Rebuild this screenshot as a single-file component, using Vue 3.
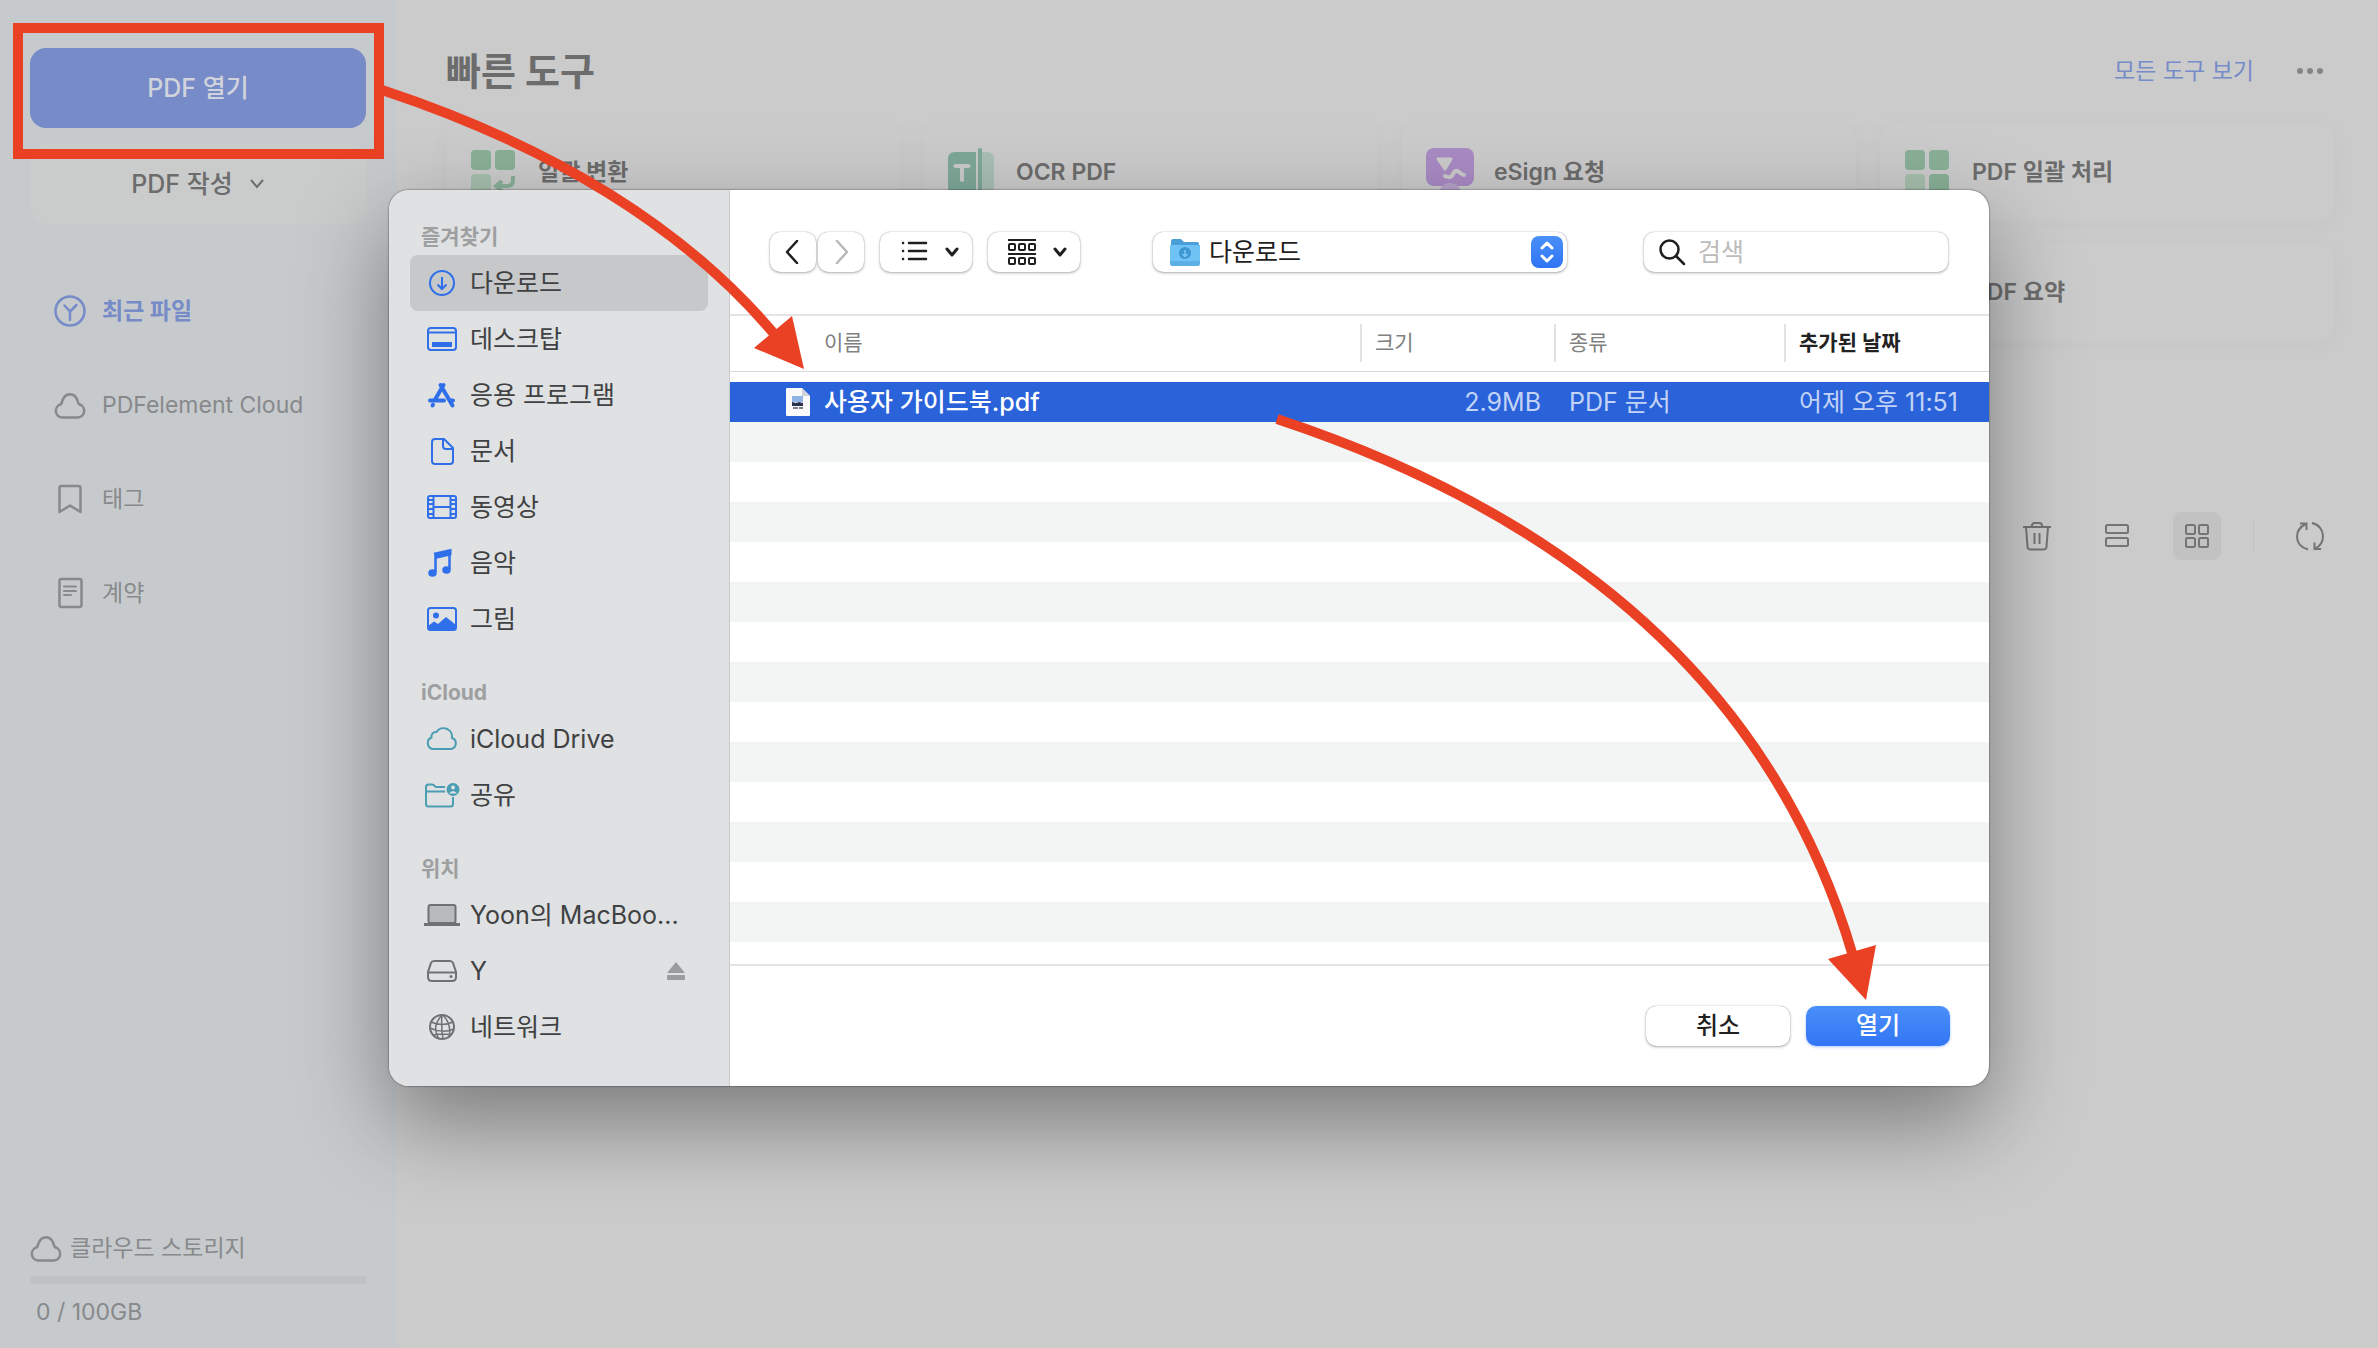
<script setup>
import { ref } from 'vue'

const navIcons = {
  recent: '<circle cx="16" cy="16" r="14.5"/><path d="M10.500 10.500 16 16.500 22.500 10M16 16.500V25"/>',
  cloud: '<path d="M8 28.500a6.700 6.700 0 0 1-1-13.200C8 13 8.500 10.500 10 8.500a7.300 7.300 0 0 1 12 0c1.500 2 1.600 4.700 3 6.800a6.700 6.700 0 0 1-1 13.200z"/>',
  tag: '<path d="M5.500 29V5q0-2 2-2h17q2 0 2 2v24L16 22.500z"/>',
  contract: '<rect x="5.500" y="2" width="22" height="28" rx="2"/><path d="M10 9.500h12M10 14h12M10 18h7" stroke-width="2"/>'
}

const nav = [
  { icon: 'recent', label: '최근 파일', active: true },
  { icon: 'cloud', label: 'PDFelement Cloud' },
  { icon: 'tag', label: '태그' },
  { icon: 'contract', label: '계약' }
]

const toolIcons = {
  convert: '<rect x="1" y="2" width="20" height="20" rx="4" fill="#89b097"/><rect x="25" y="2" width="20" height="20" rx="4" fill="#89b097"/><rect x="1" y="26" width="20" height="20" rx="4" fill="#a6bfad"/><path d="M43 28v4q0 6-6 6h-10M32 33l-6 5 6 5" fill="none" stroke="#89b097" stroke-width="4"/>',
  ocr: '<path d="M7 4h21v42H7q-7 0-7-7V11q0-7 7-7z" fill="#7fa898"/><rect x="30" y="0" width="4" height="48" rx="2" fill="#7fa898"/><path d="M34 4h5q7 0 7 7v28q0 7-7 7h-5z" fill="#a9bfb4"/><path d="M7.500 18h13M14 18v14" stroke="#cbcbcb" stroke-width="4" stroke-linecap="round"/>',
  sign: '<rect x="0" y="0" width="48" height="38" rx="8" fill="#a98bc4"/><circle cx="24" cy="46" r="11" fill="#b9a3cb"/><path d="M12 11h13l-6 10z" fill="#cbcbcb" stroke="#cbcbcb" stroke-width="3" stroke-linejoin="round"/><path d="M19 28q6 3 8-2t6-2 5 3" fill="none" stroke="#cbcbcb" stroke-width="4" stroke-linecap="round"/>',
  batch: '<rect x="1" y="2" width="20" height="20" rx="4" fill="#89b097"/><rect x="25" y="2" width="20" height="20" rx="4" fill="#89b097"/><rect x="1" y="26" width="20" height="20" rx="4" fill="#a6bfad"/><rect x="25" y="26" width="20" height="20" rx="4" fill="#89b097"/>'
}

const tools = [
  { icon: 'convert', label: '일괄 변환' },
  { icon: 'ocr', label: 'OCR PDF' },
  { icon: 'sign', label: 'eSign 요청' },
  { icon: 'batch', label: 'PDF 일괄 처리' },
  {},
  {},
  {},
  { icon: '', label: 'PDF 요약' }
]

const placeIcons = {
  downloads: '<circle cx="20" cy="20" r="12"/><path d="M20 14v12M15.500 21.500 20 26l4.500-4.500"/>',
  desktop: '<rect x="6" y="9" width="28" height="22" rx="3"/><path d="M6 13.500h28"/><rect x="11" y="24" width="18" height="3" fill="currentColor"/>',
  apps: '<g stroke-width="4" stroke-linecap="round"><path d="M21.500 10 12.500 25.500M18.500 10l12 20.500M8 25.500h14M28 25.500h3" /><path d="M10.500 30.500l.5-.8"/></g>',
  documents: '<path d="M13 8h9l9 9v13q0 3-3 3H13q-3 0-3-3V11q0-3 3-3z"/><path d="M21 8v7q0 3 3 3h7"/>',
  movies: '<rect x="6" y="9" width="28" height="22" rx="2"/><path d="M11.500 9v22M28.500 9v22M11.500 20h17M6 13h5M6 17h5M6 22h5M6 27h5M29 13h5M29 17h5M29 22h5M29 27h5"/>',
  music: '<path d="M13 10.500 28.500 7v4.500L15 14.500z" fill="currentColor"/><path d="M13.500 11v18M27.500 8v18" stroke-width="2.500"/><ellipse cx="10.500" cy="30" rx="3.500" ry="3" fill="currentColor" stroke-width="1.500"/><ellipse cx="24.500" cy="27" rx="3.500" ry="3" fill="currentColor" stroke-width="1.500"/>',
  pictures: '<rect x="6" y="9" width="28" height="22" rx="2.500"/><circle cx="14" cy="16.500" r="3" fill="currentColor" stroke="none"/><path d="M6 27l6-4.500 4 2.500 8-7 10 8v5H6z" fill="currentColor" stroke="none"/>',
  icloud: '<path d="M11 30a6 6 0 0 1-1.500-11.500 4.500 4.500 0 0 1 5-5.500 8.500 8.500 0 0 1 15.500 6 5.700 5.700 0 0 1-1 11z"/>',
  shared: '<path d="M31 22v7q0 2.500-2.500 2.500H6.500Q4 31.500 4 29V12q0-2.500 2.500-2.500H10q1.500 0 2.500 1.300t2.500 1.300h8M4 16.500h19"/><circle cx="31" cy="14.500" r="6.500" fill="currentColor" stroke="none"/><circle cx="31" cy="12.500" r="2" fill="#dfe1e2" stroke="none"/><path d="M27 18.500q4-5 8 0z" fill="#dfe1e2" stroke="none"/>',
  laptop: '<rect x="6.500" y="10" width="27" height="18" rx="2" fill="#b9babb"/><path d="M2 29.500h36" stroke-width="3"/>',
  drive: '<path d="M12 10h16q2 0 3 2l3 9v5q0 4-4 4H10q-4 0-4-4v-5l3-9q1-2 3-2z"/><path d="M6.500 21.500h27"/><circle cx="29" cy="25.500" r="1.500" fill="currentColor" stroke="none"/>',
  network: '<circle cx="20" cy="20" r="12"/><path d="M9 15q11 5 22 0M8 21q12 6 24 1M11 28q9-2 18 0M20 8q-11 12-3 24M21 8q9 10 6 22M20 8q-1 12 1 24" stroke-width="1.500"/>'
}

const groups = [
  {
    title: '즐겨찾기',
    tone: 'blue',
    places: [
      { icon: 'downloads', label: '다운로드', active: true },
      { icon: 'desktop', label: '데스크탑' },
      { icon: 'apps', label: '응용 프로그램' },
      { icon: 'documents', label: '문서' },
      { icon: 'movies', label: '동영상' },
      { icon: 'music', label: '음악' },
      { icon: 'pictures', label: '그림' }
    ]
  },
  {
    title: 'iCloud',
    tone: 'teal',
    places: [
      { icon: 'icloud', label: 'iCloud Drive' },
      { icon: 'shared', label: '공유' }
    ]
  },
  {
    title: '위치',
    tone: 'gray',
    places: [
      { icon: 'laptop', label: 'Yoon의 MacBoo...' },
      { icon: 'drive', label: 'Y', eject: true },
      { icon: 'network', label: '네트워크' }
    ]
  }
]

const files = [{ name: '사용자 가이드북.pdf', size: '2.9MB', kind: 'PDF 문서', added: '어제 오후 11:51' }]
const query = ref('')
const folder = ref('다운로드')
</script>

<template>
  <div class="app">
    <aside class="sidebar">
      <div class="primary">
        <button class="open-pdf" type="button">PDF 열기</button>
        <span class="highlight"></span>
      </div>
      <button class="create-pdf" type="button">
        PDF 작성
        <svg width="16" height="12" viewBox="0 0 16 12" fill="none" stroke="currentColor" stroke-width="2"><path d="M2 2l6 7 6-7" /></svg>
      </button>
      <nav class="nav">
        <a v-for="item in nav" :key="item.label" href="#" :class="{ active: item.active }">
          <svg width="32" height="32" viewBox="0 0 32 32" fill="none" stroke="currentColor" stroke-width="2.500" stroke-linejoin="round" stroke-linecap="round" v-html="navIcons[item.icon]"></svg>
          {{ item.label }}
        </a>
      </nav>
      <div class="storage">
        <div class="storage-title">
          <svg width="32" height="32" viewBox="0 0 32 32" fill="none" stroke="currentColor" stroke-width="2.500" v-html="navIcons.cloud"></svg>
          클라우드 스토리지
        </div>
        <div class="meter"></div>
        <div class="usage">0 / 100GB</div>
      </div>
    </aside>

    <main class="main">
      <header class="head">
        <h1>빠른 도구</h1>
        <a href="#">모든 도구 보기</a>
        <button class="icon-btn" type="button" aria-label="더 보기">
          <svg width="28" height="8" viewBox="0 0 28 8" fill="currentColor"><circle cx="4" cy="4" r="3" /><circle cx="14" cy="4" r="3" /><circle cx="24" cy="4" r="3" /></svg>
        </button>
      </header>
      <div class="tools">
        <div v-for="(tool, i) in tools" :key="i" class="tool">
          <svg width="48" height="48" viewBox="0 0 48 48" v-html="toolIcons[tool.icon]"></svg>
          <span>{{ tool.label }}</span>
        </div>
      </div>
      <div class="view-bar">
        <button class="icon-btn" type="button" aria-label="삭제">
          <svg width="32" height="32" viewBox="0 0 32 32" fill="none" stroke="currentColor" stroke-width="2"><path d="M2 7h28M5 7l1.500 20q.3 2.500 3 2.500h13q2.700 0 3-2.500L27 7M10.500 7q.5-4 3-4h5q2.500 0 3 4M13.500 13v11M18.500 13v11" /></svg>
        </button>
        <button class="icon-btn" type="button" aria-label="목록 보기">
          <svg width="32" height="32" viewBox="0 0 32 32" fill="none" stroke="currentColor" stroke-width="2"><rect x="5" y="5" width="22" height="8" rx="1.500" /><rect x="5" y="18" width="22" height="8" rx="1.500" /></svg>
        </button>
        <button class="icon-btn on" type="button" aria-label="격자 보기">
          <svg width="32" height="32" viewBox="0 0 32 32" fill="none" stroke="currentColor" stroke-width="2"><rect x="5" y="5" width="9" height="9" rx="1.500" /><rect x="18" y="5" width="9" height="9" rx="1.500" /><rect x="5" y="18" width="9" height="9" rx="1.500" /><rect x="18" y="18" width="9" height="9" rx="1.500" /></svg>
        </button>
        <span class="rule"></span>
        <button class="icon-btn" type="button" aria-label="새로 고침">
          <svg width="32" height="32" viewBox="0 0 32 32" fill="none" stroke="currentColor" stroke-width="2"><path d="M14 29.500C7 27.500 3 22.500 3 16.500 3 11 6 7 11.500 4M6 3.500h6.500V10M18 3c7 1.500 11 7 11 13s-3 10.500-8.500 13M20.500 22.500V29H27" /></svg>
        </button>
      </div>
    </main>

    <div class="dialog-wrap">
      <section class="dialog" role="dialog">
        <aside class="places">
          <div v-for="group in groups" :key="group.title" class="group">
            <h2>{{ group.title }}</h2>
            <a v-for="place in group.places" :key="place.label" href="#" :class="{ active: place.active }">
              <svg :class="group.tone" width="40" height="40" viewBox="0 0 40 40" fill="none" stroke="currentColor" stroke-width="2" v-html="placeIcons[place.icon]"></svg>
              <span>{{ place.label }}</span>
              <svg v-if="place.eject" class="eject" width="20" height="20" viewBox="0 0 20 20" fill="currentColor"><path d="M10 1 19 12H1z" /><rect x="1" y="14" width="18" height="5" rx="1" /></svg>
            </a>
          </div>
        </aside>
        <div class="browser">
          <div class="toolbar">
            <div class="history">
              <button class="ctl" type="button" aria-label="뒤로"><svg width="16" height="24" viewBox="0 0 16 24" fill="none" stroke="currentColor" stroke-width="2.500" stroke-linecap="round" stroke-linejoin="round"><path d="M12 1 2 12l10 11" /></svg></button>
              <button class="ctl" type="button" aria-label="앞으로" disabled><svg width="16" height="24" viewBox="0 0 16 24" fill="none" stroke="currentColor" stroke-width="2.500" stroke-linecap="round" stroke-linejoin="round"><path d="M4 1l10 11L4 23" /></svg></button>
            </div>
            <button class="ctl wide" type="button" aria-label="목록">
              <svg width="28" height="28" viewBox="0 0 28 28" fill="none" stroke="currentColor" stroke-width="2.500" stroke-linecap="round"><path d="M9 5h17M9 13h17M9 21h17M3 5h.1M3 13h.1M3 21h.1" /></svg>
              <svg width="16" height="12" viewBox="0 0 16 12" fill="none" stroke="currentColor" stroke-width="3" stroke-linecap="round" stroke-linejoin="round"><path d="M3 3l5 6 5-6" /></svg>
            </button>
            <button class="ctl wide" type="button" aria-label="그룹">
              <svg width="28" height="28" viewBox="0 0 28 28" fill="none" stroke="currentColor" stroke-width="2"><path d="M0 2h28M0 16h28" /><g><rect x="1" y="6" width="6" height="6" rx="1" /><rect x="11" y="6" width="6" height="6" rx="1" /><rect x="21" y="6" width="6" height="6" rx="1" /><rect x="1" y="20" width="6" height="6" rx="1" /><rect x="11" y="20" width="6" height="6" rx="1" /><rect x="21" y="20" width="6" height="6" rx="1" /></g></svg>
              <svg width="16" height="12" viewBox="0 0 16 12" fill="none" stroke="currentColor" stroke-width="3" stroke-linecap="round" stroke-linejoin="round"><path d="M3 3l5 6 5-6" /></svg>
            </button>
            <label class="ctl folder">
              <svg width="32" height="32" viewBox="0 0 32 32"><path d="M2 5q0-2 2-2h8l3 3h13q2 0 2 2v6H2z" fill="#4b9fd8" /><path d="M1 9h30v18q0 3-3 3H4q-3 0-3-3z" fill="#6fc2f4" /><path d="M1 25h30v2q0 3-3 3H4q-3 0-3-3z" fill="#5bb0e6" /><circle cx="16" cy="17" r="6" fill="#3e97d1" /><path d="M16 14v6M13.500 18l2.500 2.500 2.500-2.500" fill="none" stroke="#7cc9f7" stroke-width="1.500" /></svg>
              <select v-model="folder" aria-label="폴더"><option>다운로드</option></select>
              <span class="stepper"><svg width="16" height="24" viewBox="0 0 16 24" fill="none" stroke="#fff" stroke-width="3" stroke-linecap="round" stroke-linejoin="round"><path d="M3 8l5-5 5 5M3 16l5 5 5-5" /></svg></span>
            </label>
            <label class="ctl search">
              <svg width="28" height="28" viewBox="0 0 28 28" fill="none" stroke="currentColor" stroke-width="2.500" stroke-linecap="round"><circle cx="11.500" cy="11.500" r="9" /><path d="M18 18l8 8" /></svg>
              <input v-model="query" type="text" placeholder="검색" aria-label="검색" />
            </label>
          </div>
          <div class="list">
            <table>
              <thead>
                <tr>
                  <th class="c-name">이름</th>
                  <th class="c-size"><span>크기</span></th>
                  <th class="c-kind"><span>종류</span></th>
                  <th class="c-date"><span>추가된 날짜</span></th>
                </tr>
              </thead>
              <tbody>
                <tr v-for="file in files" :key="file.name">
                  <td class="c-name">
                    <svg width="24" height="28" viewBox="0 0 24 28"><path d="M1 0h15l8 8v19q0 1-1 1H1q-1 0-1-1V1q0-1 1-1z" fill="#fafafa" /><path d="M16 0v8h8z" fill="#cfd3dc" /><path d="M6 8h11v6H6z" fill="#8fb4e6" /><path d="M6 14l4 1 3-1 4 1v3H6z" fill="#28324a" /><path d="M7 20h5M13 20h4" stroke="#777e8c" stroke-width="2" fill="none" /></svg>
                    {{ file.name }}
                  </td>
                  <td class="c-size">{{ file.size }}</td>
                  <td class="c-kind">{{ file.kind }}</td>
                  <td class="c-date">{{ file.added }}</td>
                </tr>
              </tbody>
            </table>
          </div>
          <footer class="actions">
            <button class="cancel" type="button">취소</button>
            <button class="confirm" type="button">열기</button>
          </footer>
        </div>
      </section>
      <svg class="arrows" viewBox="389 190 1600 896" fill="none" stroke="#ea4125" stroke-width="10">
        <path d="M382 90Q642 176 776 336" />
        <path d="M804 369 792 316 754 348z" fill="#ea4125" stroke="none" />
        <path d="M1277 419Q1740 572 1853 956" />
        <path d="M1866 1000 1876 945 1828 959z" fill="#ea4125" stroke="none" />
      </svg>
    </div>
  </div>
</template>

<style>
body {
  margin: 0;
}
</style>

<style scoped>
.app {
  position: relative;
  display: grid;
  grid-template-columns: 397px 1fr;
  min-height: 100vh;
  overflow: hidden;
  background: #cbcbcb;
  color: #6c6c6c;
  font-family: Inter, "Noto Sans CJK KR", sans-serif;
  font-size: 23px;
  line-height: 32px;
}
.app * {
  box-sizing: border-box;
}
button,
input,
select {
  margin: 0;
  padding: 0;
  border: 0;
  background: none;
  color: inherit;
  font: inherit;
}
a {
  color: inherit;
  text-decoration: none;
}
svg {
  flex: none;
}
.sidebar {
  display: flex;
  flex-direction: column;
  padding: 48px 31px 20px 30px;
  background: #c6cacd;
}
.primary {
  position: relative;
  display: flex;
}
.open-pdf,
.create-pdf {
  flex: 1;
  height: 80px;
  border-radius: 16px;
  font-size: 25px;
  font-weight: 500;
}
.open-pdf {
  background: #768bc8;
  color: #d0d3dc;
}
.highlight {
  position: absolute;
  inset: -25px -18px -31px -17px;
  border: 10px solid #ea4125;
  pointer-events: none;
}
.create-pdf {
  display: flex;
  flex: none;
  align-items: center;
  justify-content: center;
  gap: 16px;
  margin-top: 16px;
  background: #cacbcb;
}
.nav {
  margin-top: 40px;
}
.nav a {
  display: flex;
  align-items: center;
  gap: 16px;
  height: 94px;
  padding-left: 24px;
  color: #87898b;
}
.nav a.active {
  color: #768bc8;
  font-weight: 700;
}
.storage {
  margin-top: auto;
  color: #87898b;
}
.storage-title {
  display: flex;
  align-items: center;
  gap: 8px;
}
.meter {
  height: 8px;
  margin: 12px 0;
  border-radius: 4px;
  background: #c0c1c2;
}
.usage {
  padding-left: 6px;
}
.main {
  padding: 47px 44px 0 49px;
}
.head {
  display: flex;
  align-items: center;
  gap: 32px;
  height: 48px;
}
h1 {
  flex: 1;
  margin: 0;
  font-size: 38px;
  font-weight: 700;
}
.head a {
  color: #768bc8;
}
.icon-btn {
  display: grid;
  place-items: center;
  width: 48px;
  height: 48px;
  border-radius: 8px;
  color: #747474;
}
.icon-btn.on {
  background: #c2c2c2;
}
.head .icon-btn {
  color: #858585;
}
.tools {
  display: grid;
  grid-template-columns: repeat(4, 1fr);
  gap: 24px;
  margin-top: 29px;
}
.tool {
  display: flex;
  align-items: center;
  gap: 20px;
  height: 96px;
  padding-left: 24px;
  border-radius: 16px;
  background: #cbcbcb;
  box-shadow: 0 4px 20px rgba(90, 100, 100, 0.04);
  font-weight: 600;
}
.view-bar {
  display: flex;
  align-items: center;
  justify-content: flex-end;
  gap: 32px;
  margin-top: 172px;
}
.rule {
  width: 1px;
  height: 32px;
  background: #c0c0c0;
}
.dialog-wrap {
  position: absolute;
  top: 190px;
  right: 0;
  left: 0;
  width: 1600px;
  margin: 0 auto;
}
.dialog {
  display: flex;
  min-height: 896px;
  overflow: hidden;
  border-radius: 20px;
  background: #fff;
  box-shadow: 0 0 2px rgba(0, 0, 0, 0.7), 0 36px 90px rgba(0, 0, 0, 0.4);
  color: #1f1f1f;
  font-size: 25px;
}
.arrows {
  position: absolute;
  inset: 0;
  width: 100%;
  overflow: visible;
  pointer-events: none;
}
.places {
  width: 341px;
  padding: 29px 21px 0;
  border-right: 1px solid #c8caca;
  background: #dfe1e2;
}
.group {
  margin-bottom: 28px;
}
.group h2 {
  margin: 0;
  padding: 2px 0 2px 11px;
  color: #9d9fa0;
  font-size: 21px;
  font-weight: 700;
}
.group a {
  display: flex;
  align-items: center;
  gap: 8px;
  height: 56px;
  padding: 0 22px 0 12px;
  border-radius: 8px;
  color: #404142;
  white-space: nowrap;
}
.group a.active {
  background: #c7c8c9;
}
.group span {
  flex: 1;
}
.blue {
  color: #2f6fea;
}
.teal {
  color: #4a9db3;
}
.gray {
  color: #707172;
}
.eject {
  color: #9b9c9d;
}
.browser {
  display: flex;
  flex: 1;
  flex-direction: column;
}
.toolbar {
  display: flex;
  align-items: center;
  height: 126px;
  padding: 0 41px 0 40px;
  border-bottom: 2px solid #e4e4e4;
}
.history {
  display: flex;
  gap: 2px;
}
.ctl {
  display: flex;
  align-items: center;
  justify-content: center;
  width: 46px;
  height: 40px;
  border-radius: 10px;
  background: #fff;
  box-shadow: 0 0 1px rgba(0, 0, 0, 0.4), 0 1px 3px rgba(0, 0, 0, 0.3);
}
.ctl:disabled {
  color: #b9b9b9;
}
.wide {
  gap: 16px;
  width: 92px;
  margin-left: 16px;
  padding-left: 8px;
}
.folder {
  justify-content: flex-start;
  gap: 8px;
  width: 414px;
  margin: 0 auto 0 73px;
  padding: 0 4px 0 16px;
}
.folder select {
  flex: 1;
  height: 40px;
  appearance: none;
}
.stepper {
  display: grid;
  place-items: center;
  width: 32px;
  height: 32px;
  border-radius: 8px;
  background: linear-gradient(#4a90f9, #2f74f3);
}
.search {
  justify-content: flex-start;
  gap: 12px;
  width: 304px;
  padding: 0 14px;
}
.search input {
  width: 100%;
  min-width: 0;
}
.search input::placeholder {
  color: #bcbcbc;
  opacity: 1;
}
.list {
  flex: 1;
  background:
    linear-gradient(#fff, #fff) 0 0 / 100% 66px no-repeat,
    linear-gradient(#fff 50%, #f3f5f5 50%) 0 66px / 100% 80px repeat-y;
}
table {
  width: 100%;
  border-collapse: collapse;
  table-layout: fixed;
}
thead tr {
  border-bottom: 1px solid #dadada;
}
th {
  height: 55px;
  padding: 0;
  color: #808080;
  font-size: 21px;
  font-weight: 400;
  text-align: left;
}
th span {
  display: block;
  height: 38px;
  padding-left: 13px;
  border-left: 2px solid #e2e2e2;
  line-height: 38px;
}
th.c-date {
  color: #222;
  font-weight: 700;
}
.c-name {
  width: 630px;
  padding-left: 94px;
}
.c-size {
  width: 194px;
}
.c-kind {
  width: 230px;
}
tbody::before {
  display: block;
  height: 10px;
  content: "";
}
tbody tr {
  background: #2962d9;
}
td {
  height: 40px;
  padding: 0 0 0 15px;
  color: #c3d3f6;
  font-size: 25px;
}
td.c-name {
  display: flex;
  align-items: center;
  gap: 14px;
  padding-left: 56px;
  color: #fff;
  font-weight: 500;
}
td.c-size {
  padding-right: 13px;
  text-align: right;
}
.actions {
  display: flex;
  justify-content: flex-end;
  gap: 16px;
  height: 122px;
  padding: 40px 39px;
  border-top: 2px solid #e4e4e4;
}
.actions button {
  width: 144px;
  height: 40px;
  border-radius: 10px;
  font-size: 24px;
  font-weight: 500;
}
.cancel {
  box-shadow: 0 0 1px rgba(0, 0, 0, 0.4), 0 1px 3px rgba(0, 0, 0, 0.3);
}
.confirm {
  background: linear-gradient(#4a8ff9, #3275f5);
  box-shadow: 0 1px 3px rgba(50, 117, 245, 0.4);
  color: #fff;
}
</style>
